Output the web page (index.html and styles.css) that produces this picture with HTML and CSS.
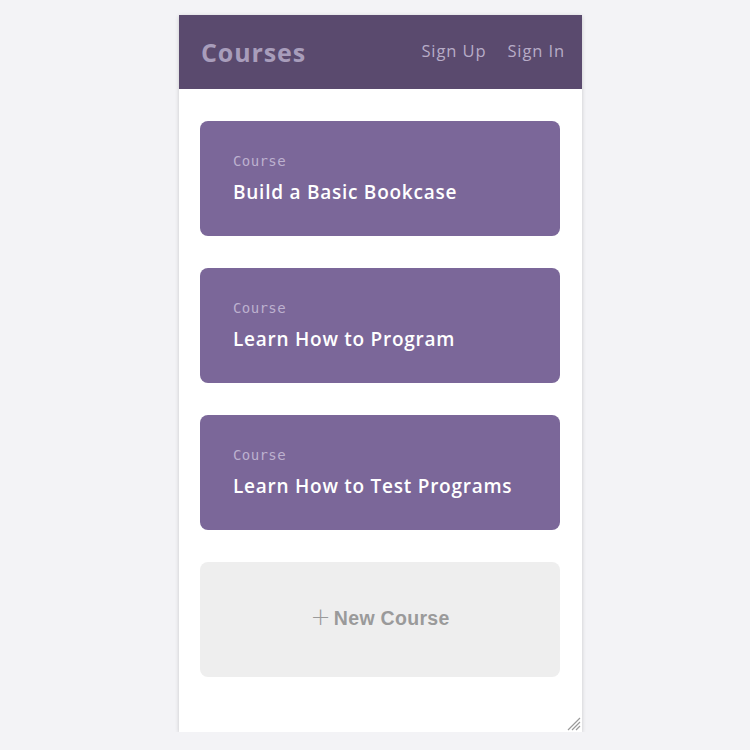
FILE: index.html
```html
<!DOCTYPE html>
<html lang="en">
<head>
    <meta charset="UTF-8">
    <meta name="viewport" content="width=device-width, initial-scale=1.0">
    <title>Courses</title>
    <link rel="stylesheet" href="styles.css">
</head>
<body>
    <div class="frame">
        <div class="header">
            <h1>Courses</h1>
            <nav class="nav">
                <a href="#">Sign Up</a>
                <a href="#">Sign In</a>
            </nav>
        </div>

        <div class="list">
            <a class="card" href="#">
                <span class="label">Course</span>
                <h3>Build a Basic Bookcase</h3>
            </a>
            <a class="card" href="#">
                <span class="label">Course</span>
                <h3>Learn How to Program</h3>
            </a>
            <a class="card" href="#">
                <span class="label">Course</span>
                <h3>Learn How to Test Programs</h3>
            </a>
            <a class="card card-new" href="#">
                <h3><span class="plus">+</span> New Course</h3>
            </a>
        </div>

        <!-- resize grip -->
        <svg class="grip" width="15" height="15" viewBox="0 0 15 15">
            <path d="M14 2 L2 14 M14 6 L6 14 M14 10 L10 14" stroke="#9a9a9a" stroke-width="1.2" fill="none"/>
        </svg>
    </div>
</body>
</html>
```

FILE: styles.css
```css
* {
    margin: 0;
    padding: 0;
    box-sizing: border-box;
}

body {
    font-family: "Open Sans", "Liberation Sans", sans-serif;
    background: #f3f3f6;
    padding: 15px 0 0 179px;
}

.frame {
    position: relative;
    width: 403px;
    height: 717px;
    background: white;
    box-shadow: 0 1px 4px rgba(0,0,0,0.18);
    overflow: hidden;
}

.header {
    height: 74px;
    background: #5a4a6e;
    display: flex;
    align-items: center;
    justify-content: space-between;
    padding: 0 17px 0 22px;
}

.header h1 {
    font-size: 25px;
    font-weight: 700;
    color: #a89dbb;
    letter-spacing: 0.9px;
}

.nav {
    display: flex;
    gap: 21px;
    margin-top: -4px;
}

.nav a {
    color: #b7acc7;
    text-decoration: none;
    font-size: 16.5px;
    letter-spacing: 0.9px;
}

.list {
    padding: 32px 22px 0 21px;
    display: flex;
    flex-direction: column;
    gap: 32px;
}

.card {
    display: flex;
    flex-direction: column;
    justify-content: center;
    height: 115px;
    padding: 0 32px 0 33px;
    background: #7b6799;
    border-radius: 8px;
    text-decoration: none;
}

.label {
    font-family: "DejaVu Sans Mono", "Liberation Mono", monospace;
    font-size: 14px;
    color: #bdb1cf;
    margin-bottom: 10px;
    letter-spacing: 0.4px;
}

.card h3 {
    font-size: 19px;
    font-weight: 600;
    color: white;
    letter-spacing: 0.75px;
}

.card-new {
    background: #eeeeee;
    align-items: center;
    padding: 0;
}

.card-new h3 {
    font-family: "Liberation Sans", Arial, sans-serif;
    font-weight: 700;
    font-size: 19.5px;
    letter-spacing: 0.3px;
    color: #9a9a9a;
    margin-top: -3px;
    display: flex;
    align-items: center;
    gap: 3px;
}

.plus {
    font-family: "DejaVu Sans", sans-serif;
    font-weight: 200;
    font-size: 24px;
    margin-top: -3px;
}

.grip {
    position: absolute;
    right: 1px;
    bottom: 1px;
}
```
